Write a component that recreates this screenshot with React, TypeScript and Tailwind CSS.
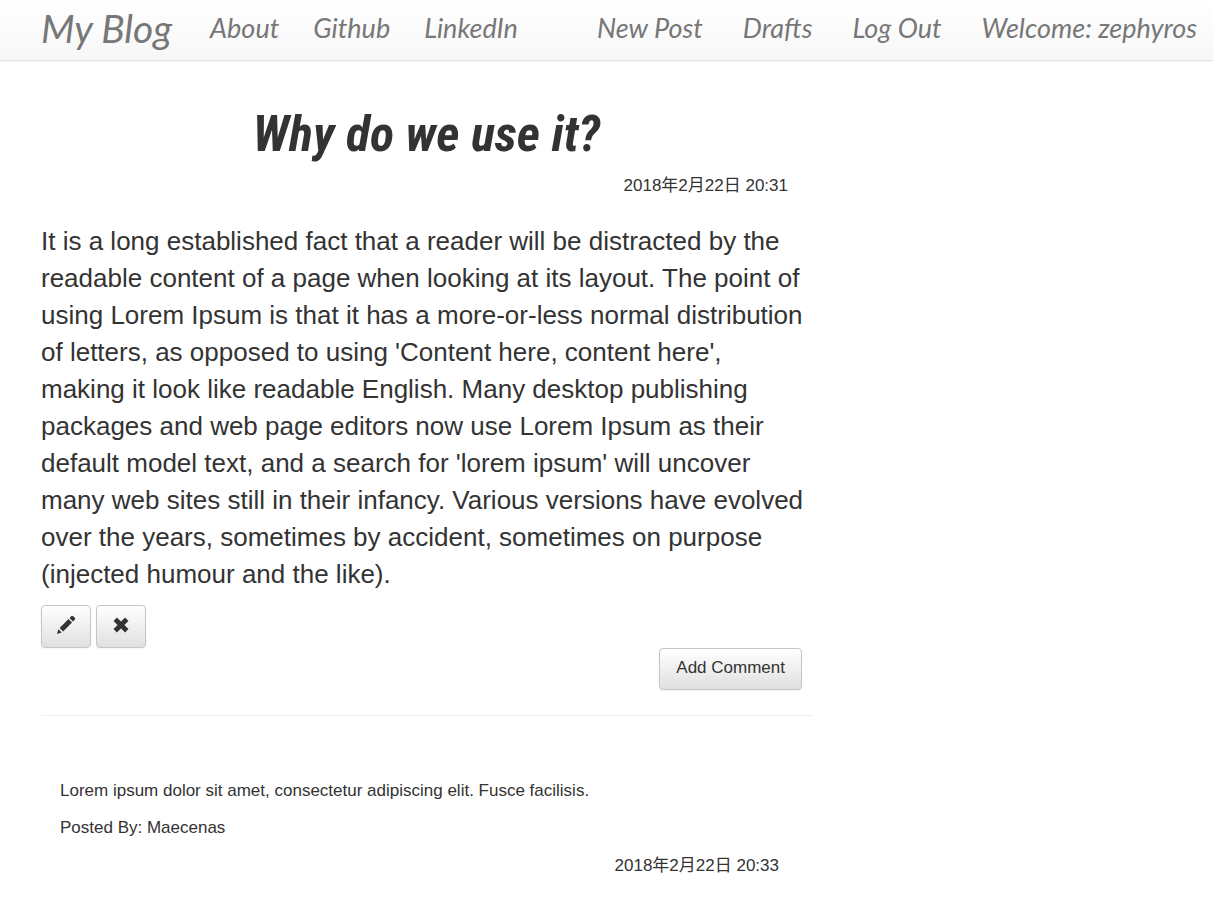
type NavItem = { label: string; href: string };

const siteLinks: NavItem[] = [
  { label: "About", href: "#about" },
  { label: "Github", href: "#github" },
  { label: "LinkedIn", href: "#linkedin" },
];

const userLinks: NavItem[] = [
  { label: "New Post", href: "#new" },
  { label: "Drafts", href: "#drafts" },
  { label: "Log Out", href: "#logout" },
  { label: "Welcome: zephyros", href: "#profile" },
];

const buttonStyle =
  "flex items-center justify-center rounded-sm border border-[#c5c5c5] bg-linear-to-b from-white to-[#e0e0e0] text-[#333] shadow-xs hover:to-[#d6d6d6]";

function NavLinks({ items, className }: { items: NavItem[]; className: string }) {
  return (
    <ul className={`flex ${className}`}>
      {items.map((item) => (
        <li key={item.label}>
          <a href={item.href} className="whitespace-nowrap hover:text-[#333]">
            {item.label}
          </a>
        </li>
      ))}
    </ul>
  );
}

function PencilIcon() {
  return (
    <svg viewBox="0 0 20 20" className="size-5" fill="currentColor" aria-hidden="true">
      <path d="M1 19 2.4 14.2 5.7 17.5Z" />
      <path d="M3.6 12.9 12.5 4 16 7.5 7.1 16.4Z" />
      <path d="M13.5 3 15.5 1Q16.4.4 17.2 1.2L18.8 2.8Q19.6 3.6 19 4.5L17 6.5Z" />
    </svg>
  );
}

function RemoveIcon() {
  return (
    <svg viewBox="0 0 16 16" className="size-4" fill="none" stroke="currentColor" strokeWidth="4.8" aria-hidden="true">
      <path d="M2.2 2.2 13.8 13.8M13.8 2.2 2.2 13.8" />
    </svg>
  );
}

export default function App() {
  return (
    <div className="min-h-screen bg-white font-['Liberation_Sans','Noto_Sans_CJK_JP',sans-serif] text-[17px]/6 text-[#333]">
      <header className="border-b border-[#e2e2e2] bg-linear-to-b from-white to-[#f7f7f7] shadow-xs">
        <nav className="flex h-[60px] items-center justify-between pr-4 pb-1 pl-[41px] font-['Lato',sans-serif] text-[27px]/8 text-[#777] italic">
          <div className="flex items-center gap-[38px]">
            <a href="#home" className="text-[39px]/10 whitespace-nowrap hover:text-[#333]">
              My Blog
            </a>
            <NavLinks items={siteLinks} className="gap-[34px]" />
          </div>
          <NavLinks items={userLinks} className="gap-10" />
        </nav>
      </header>

      <main className="ml-[41px] max-w-[771px] pt-[43px]">
        <article>
          <h1 className="text-center font-['Roboto_Condensed','Lato',sans-serif] text-[50px]/[60px] font-bold italic">
            Why do we use it?
          </h1>
          <p className="mt-[10px] pr-6 text-right">
            <time dateTime="2018-02-22T20:31">2018年2月22日 20:31</time>
          </p>
          <p className="mt-[25px] text-[26px]/[37px]">
            It is a long established fact that a reader will be distracted by the readable content of a page when
            looking at its layout. The point of using Lorem Ipsum is that it has a more-or-less normal distribution of
            letters, as opposed to using 'Content here, content here', making it look like readable English. Many
            desktop publishing packages and web page editors now use Lorem Ipsum as their default model text, and a
            search for 'lorem ipsum' will uncover many web sites still in their infancy. Various versions have evolved
            over the years, sometimes by accident, sometimes on purpose (injected humour and the like).
          </p>
          <div className="mt-3 flex gap-[5px]">
            <button type="button" aria-label="Edit post" className={`${buttonStyle} h-[43px] w-[50px] pb-1`}>
              <PencilIcon />
            </button>
            <button type="button" aria-label="Delete post" className={`${buttonStyle} h-[43px] w-[50px] pb-1`}>
              <RemoveIcon />
            </button>
          </div>
          <div className="flex justify-end pr-[10px]">
            <button type="button" className={`${buttonStyle} h-[42px] px-4 pb-0.5`}>
              Add Comment
            </button>
          </div>
        </article>

        <hr className="mt-[25px] border-[#eee]" />

        <section aria-label="Comments" className="mt-[63px] pr-[33px] pb-6 pl-[19px]">
          <p>Lorem ipsum dolor sit amet, consectetur adipiscing elit. Fusce facilisis.</p>
          <p className="mt-[13px]">Posted By: Maecenas</p>
          <p className="mt-[14px] text-right">
            <time dateTime="2018-02-22T20:33">2018年2月22日 20:33</time>
          </p>
        </section>
      </main>
    </div>
  );
}
